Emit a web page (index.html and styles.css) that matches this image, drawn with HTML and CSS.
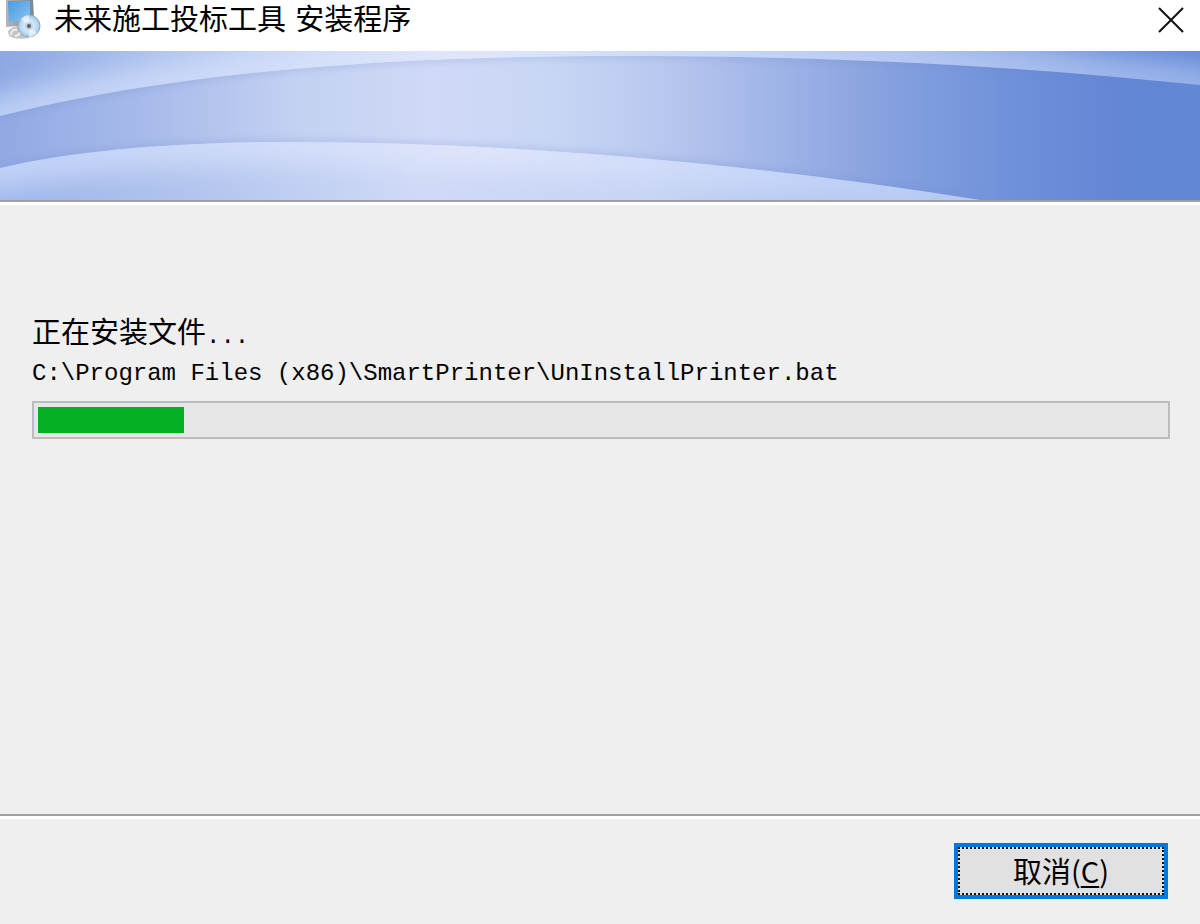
FILE: index.html
```html
<!DOCTYPE html>
<html lang="zh-CN">
<head>
<meta charset="utf-8">
<meta name="viewport" content="width=device-width, initial-scale=1">
<title>未来施工投标工具 安装程序</title>
<link rel="stylesheet" href="styles.css">
</head>
<body>
<div class="window">
  <header class="titlebar">
    <svg class="app-icon" viewBox="0 0 36 40" aria-hidden="true">
      <defs>
        <linearGradient id="screen" x1="0" y1="0" x2="1" y2="1">
          <stop offset="0" stop-color="#4a9be0"/><stop offset="1" stop-color="#86c4f2"/>
        </linearGradient>
        <linearGradient id="case" x1="0" y1="0" x2="1" y2="0">
          <stop offset="0" stop-color="#b3b6ba"/><stop offset="1" stop-color="#7c848c"/>
        </linearGradient>
        <radialGradient id="disc">
          <stop offset="0" stop-color="#eef8ff"/><stop offset=".65" stop-color="#c2e0f8"/><stop offset="1" stop-color="#a0c6e8"/>
        </radialGradient>
      </defs>
      <path d="M2 31Q5 27 12 26L23 30L23 38Q10 40 3 36Z" fill="#c2c4c5"/>
      <path d="M0 0H27L28 19L25 25L0 27Z" fill="url(#case)"/>
      <path d="M2 1H24V20L3 22Z" fill="url(#screen)"/>
      <path d="M5 35Q5 29 11 30M9 36Q15 35 14 30" fill="none" stroke="#eee" stroke-width="2"/>
      <circle cx="23" cy="26" r="11" fill="url(#disc)" stroke="#98a9b8"/>
      <path d="M23 26L15 19A11 11 0 0 1 23 15ZM23 26L31 33A11 11 0 0 1 23 37Z" fill="#fff" opacity=".55"/>
      <circle cx="23" cy="26" r="4" fill="#c7d1d9"/>
      <circle cx="23" cy="26" r="2" fill="#56606a"/>
    </svg>
    <h1 class="title">未来施工投标工具 安装程序</h1>
    <button class="close" type="button" aria-label="关闭">
      <svg viewBox="0 0 26 26" aria-hidden="true"><path d="M1 1L25 25M25 1L1 25" stroke="#111" stroke-width="2"/></svg>
    </button>
  </header>

  <svg class="banner" viewBox="0 0 1200 149" preserveAspectRatio="none" aria-hidden="true">
    <defs>
      <linearGradient id="sky" gradientUnits="userSpaceOnUse" x1="0" y1="0" x2="1200" y2="0">
        <stop offset="0" stop-color="#8ca8e3"/><stop offset=".12" stop-color="#a9bfec"/>
        <stop offset=".26" stop-color="#c8d6f5"/><stop offset=".37" stop-color="#dbe2f9"/>
        <stop offset=".5" stop-color="#c8d8f7"/><stop offset=".66" stop-color="#aebfea"/>
        <stop offset=".82" stop-color="#8aa5de"/><stop offset=".93" stop-color="#668ad7"/><stop offset="1" stop-color="#6085d5"/>
      </linearGradient>
      <linearGradient id="band" gradientUnits="userSpaceOnUse" x1="0" y1="0" x2="1200" y2="0">
        <stop offset="0" stop-color="#91a9e4"/><stop offset=".12" stop-color="#a7baea"/>
        <stop offset=".25" stop-color="#c3d1f2"/><stop offset=".36" stop-color="#d0d9f6"/>
        <stop offset=".46" stop-color="#c8d6f4"/><stop offset=".55" stop-color="#b9c8ef"/>
        <stop offset=".67" stop-color="#99afe5"/><stop offset=".75" stop-color="#839fde"/>
        <stop offset=".85" stop-color="#6e90da"/><stop offset=".93" stop-color="#6387d6"/><stop offset="1" stop-color="#6288d5"/>
      </linearGradient>
      <linearGradient id="hill" gradientUnits="userSpaceOnUse" x1="0" y1="0" x2="1000" y2="0">
        <stop offset="0" stop-color="#9db4ea"/><stop offset=".2" stop-color="#b3c5ef"/>
        <stop offset=".42" stop-color="#d0daf7"/><stop offset=".65" stop-color="#c7d4f4"/>
        <stop offset=".85" stop-color="#aec1ed"/><stop offset="1" stop-color="#a0b9ef"/>
      </linearGradient>
      <linearGradient id="glow" gradientUnits="userSpaceOnUse" x1="0" y1="0" x2="1200" y2="0">
        <stop offset="0" stop-color="#c8d8fa"/><stop offset=".4" stop-color="#e2e8fb"/>
        <stop offset=".65" stop-color="#c9d8fa"/><stop offset="1" stop-color="#a6bfef"/>
      </linearGradient>
      <filter id="soft" filterUnits="userSpaceOnUse" x="-100" y="-80" width="1400" height="320"><feGaussianBlur stdDeviation="14"/></filter>
      <filter id="edge" filterUnits="userSpaceOnUse" x="-100" y="-80" width="1400" height="320"><feGaussianBlur stdDeviation="3"/></filter>
      <clipPath id="skyClip"><path d="M0 0H1200V34C1000 13 820 5 620 5C390 5 180 20 0 65Z"/></clipPath>
      <clipPath id="hillClip"><path d="M0 117C80 98 190 91 290 91C520 91 760 114 980 149H0Z"/></clipPath>
      <clipPath id="bandClip"><path d="M0 65C180 20 390 5 620 5C820 5 1000 13 1200 34V149H980C760 114 520 91 290 91C190 91 80 98 0 117Z"/></clipPath>
    </defs>
    <rect width="1200" height="149" fill="url(#band)"/>
    <g clip-path="url(#bandClip)">
      <path d="M0 65C180 20 390 5 620 5C820 5 1000 13 1200 34M0 117C80 98 190 91 290 91C520 91 760 114 980 149" fill="none" stroke="#6e86c8" stroke-width="5" opacity=".25" filter="url(#edge)"/>
    </g>
    <g clip-path="url(#skyClip)">
      <rect width="1200" height="70" fill="url(#sky)"/>
      <path d="M-60 82L0 65C180 20 390 5 620 5C820 5 1000 13 1200 34L1260 41" fill="none" stroke="url(#glow)" stroke-width="40" opacity=".85" filter="url(#soft)"/>
    </g>
    <g clip-path="url(#hillClip)">
      <rect y="85" width="1000" height="64" fill="url(#hill)"/>
      <path d="M-60 132L0 117C80 98 190 91 290 91C520 91 760 114 980 149L1040 159" fill="none" stroke="url(#glow)" stroke-width="44" opacity=".85" filter="url(#soft)"/>
    </g>
  </svg>

  <main class="content">
    <label class="status" for="install-progress">正在安装文件<span class="latin">...</span></label>
    <p class="path">C:\Program Files (x86)\SmartPrinter\UnInstallPrinter.bat</p>
    <progress class="progress" id="install-progress" value="13" max="100"></progress>
  </main>

  <footer class="actions">
    <button class="cancel" type="button"><span class="cancel-label">取消(<u>C</u>)</span></button>
  </footer>
</div>
</body>
</html>
```
FILE: styles.css
```css
* { box-sizing: border-box; }

body {
  margin: 0;
  background: #efefef;
  color: #000;
  font-family: "Noto Sans CJK SC", sans-serif;
}

.window {
  display: flex;
  flex-direction: column;
  min-height: 100vh;
}

.titlebar {
  display: flex;
  align-items: flex-start;
  gap: 12px;
  height: 51px;
  padding: 0 16px 0 6px;
  background: #fff;
}

.app-icon { width: 36px; height: 40px; }

.title {
  flex: 1;
  margin: 0;
  font: 400 29px/40px "DejaVu Sans", "Noto Sans CJK SC", sans-serif;
}

.close {
  width: 26px;
  height: 26px;
  margin-top: 7px;
  padding: 0;
  border: 0;
  background: none;
}

.close svg { display: block; width: 100%; height: 100%; }

.banner {
  display: block;
  width: 100%;
  height: 149px;
}

.content {
  flex: 1;
  display: flex;
  flex-direction: column;
  padding: 109px 30px 0 32px;
  border-top: 2px solid #a0a0a0;
  box-shadow: inset 0 3px #fff;
}

.status,
.cancel {
  font-family: "Noto Sans CJK SC", sans-serif;
  font-size: 29px;
}

.status { line-height: 38px; }

.latin,
.path {
  font-family: "Liberation Mono", monospace;
  font-size: 24px;
}

.path {
  margin: 0;
  line-height: 36px;
  overflow-wrap: anywhere;
}

.progress {
  appearance: none;
  width: 100%;
  height: 38px;
  margin-top: 9px;
  padding: 4px;
  border: 2px solid #bcbcbc;
  background: #e6e6e6;
}

.progress::-webkit-progress-bar { background: #e6e6e6; }
.progress::-webkit-progress-value { background: #06b025; }

.actions {
  display: flex;
  justify-content: flex-end;
  padding: 27px 32px 25px;
  border-top: 2px solid #a0a0a0;
  box-shadow: inset 0 3px #fff;
}

.cancel {
  width: 214px;
  height: 56px;
  padding: 0;
  border: 4px solid #0078d7;
  background: #e1e1e1;
  color: #000;
}

.cancel-label {
  display: block;
  height: 48px;
  border: 2px dotted #111;
  line-height: 42px;
}

.cancel u { text-underline-offset: 3px; }
```
